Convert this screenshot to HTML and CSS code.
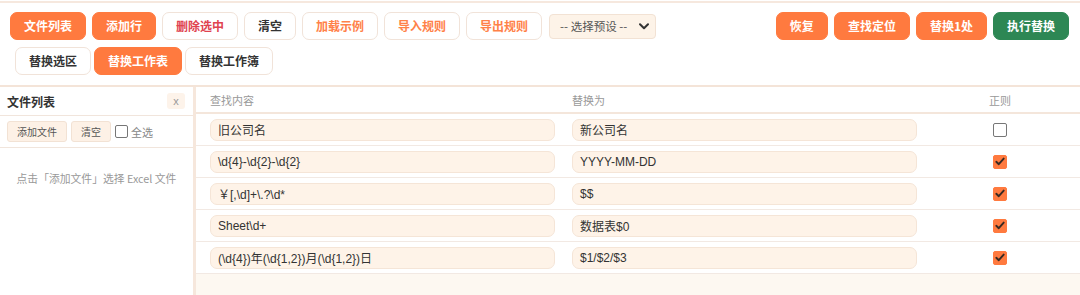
FILE: index.html
```html
<!DOCTYPE html>
<html lang="zh-CN">
<head>
<meta charset="utf-8">
<title>批量替换</title>
<link rel="stylesheet" href="styles.css">
</head>
<body>
<div class="app">
  <header class="toolbar">
    <div class="tb-row">
      <button class="btn primary">文件列表</button>
      <button class="btn primary">添加行</button>
      <button class="btn outline danger">删除选中</button>
      <button class="btn outline">清空</button>
      <button class="btn outline accent">加载示例</button>
      <button class="btn outline accent">导入规则</button>
      <button class="btn outline accent">导出规则</button>
      <div class="preset">
        <span>-- 选择预设 --</span>
        <svg width="10" height="7" viewBox="0 0 10 7"><path d="M1 1.2 L5 5.2 L9 1.2" fill="none" stroke="#333" stroke-width="2" stroke-linecap="round" stroke-linejoin="round"/></svg>
      </div>
      <div class="tb-right">
        <button class="btn primary">恢复</button>
        <button class="btn primary">查找定位</button>
        <button class="btn primary">替换1处</button>
        <button class="btn success">执行替换</button>
      </div>
    </div>
    <div class="tb-row scope">
      <button class="btn outline">替换选区</button>
      <button class="btn primary">替换工作表</button>
      <button class="btn outline">替换工作簿</button>
    </div>
  </header>

  <div class="content">
    <aside class="sidebar">
      <div class="side-head">
        <span class="side-title">文件列表</span>
        <span class="side-close">x</span>
      </div>
      <div class="side-tools">
        <button class="sbtn">添加文件</button>
        <button class="sbtn">清空</button>
        <label class="selall"><span class="box"></span>全选</label>
      </div>
      <p class="side-hint">点击「添加文件」选择 Excel 文件</p>
    </aside>

    <main class="main">
      <div class="grid head">
        <div>查找内容</div>
        <div>替换为</div>
        <div class="c">正则</div>
      </div>
      <div class="grid row">
        <div class="field">旧公司名</div>
        <div class="field">新公司名</div>
        <div class="c"><span class="chk"></span></div>
      </div>
      <div class="grid row">
        <div class="field">\d{4}-\d{2}-\d{2}</div>
        <div class="field">YYYY-MM-DD</div>
        <div class="c"><span class="chk on"><svg width="10" height="9" viewBox="0 0 10 9"><path d="M1.3 4.8 L3.8 7.2 L8.7 1.6" fill="none" stroke="#3a2a22" stroke-width="1.9" stroke-linecap="round" stroke-linejoin="round"/></svg></span></div>
      </div>
      <div class="grid row">
        <div class="field">￥[,\d]+\.?\d*</div>
        <div class="field">$$</div>
        <div class="c"><span class="chk on"><svg width="10" height="9" viewBox="0 0 10 9"><path d="M1.3 4.8 L3.8 7.2 L8.7 1.6" fill="none" stroke="#3a2a22" stroke-width="1.9" stroke-linecap="round" stroke-linejoin="round"/></svg></span></div>
      </div>
      <div class="grid row">
        <div class="field">Sheet\d+</div>
        <div class="field">数据表$0</div>
        <div class="c"><span class="chk on"><svg width="10" height="9" viewBox="0 0 10 9"><path d="M1.3 4.8 L3.8 7.2 L8.7 1.6" fill="none" stroke="#3a2a22" stroke-width="1.9" stroke-linecap="round" stroke-linejoin="round"/></svg></span></div>
      </div>
      <div class="grid row">
        <div class="field">(\d{4})年(\d{1,2})月(\d{1,2})日</div>
        <div class="field">$1/$2/$3</div>
        <div class="c"><span class="chk on"><svg width="10" height="9" viewBox="0 0 10 9"><path d="M1.3 4.8 L3.8 7.2 L8.7 1.6" fill="none" stroke="#3a2a22" stroke-width="1.9" stroke-linecap="round" stroke-linejoin="round"/></svg></span></div>
      </div>
    </main>
  </div>
</div>
</body>
</html>
```

FILE: styles.css
```css
* { box-sizing: border-box; }
html, body { margin: 0; padding: 0; background: #fff; }
body {
  font-family: "Liberation Sans", "Noto Sans CJK SC", sans-serif;
  color: #333;
  padding-top: 1px;
}
.app { width: 1080px; height: 294px; display: flex; flex-direction: column; }

.toolbar {
  border-top: 2px solid #f6e8de;
  border-bottom: 2px solid #f4e4d8;
  padding: 9px 11px 10px 10px;
  display: flex;
  flex-direction: column;
  gap: 7px;
}
.tb-row { display: flex; align-items: center; gap: 6px; }
.tb-right { margin-left: auto; display: flex; gap: 6px; }
.scope { margin-left: 5px; gap: 3px; }

.btn {
  height: 28px;
  padding: 0 13px;
  border: 1px solid transparent;
  border-radius: 7px;
  font-family: "Noto Sans CJK SC", "Liberation Sans", sans-serif;
  font-size: 12px;
  font-weight: 700;
  line-height: 1;
  display: inline-flex;
  align-items: center;
  justify-content: center;
  white-space: nowrap;
  cursor: pointer;
}
.btn.primary { background: #ff7a3f; border-color: #ff7a3f; color: #fff; }
.btn.success { background: #2d8754; border-color: #2d8754; color: #fff; }
.btn.outline { background: #fff; border-color: #f1e3d9; color: #333; }
.btn.outline.danger { color: #e0434f; }
.btn.outline.accent { color: #ff8148; }

.preset {
  width: 107px;
  height: 25px;
  margin-left: 1px;
  background: #fdf3e8;
  border: 1px solid #f2e2d4;
  border-radius: 4px;
  display: flex;
  align-items: center;
  justify-content: space-between;
  padding: 0 6px 0 10px;
  font-family: "Noto Sans CJK SC", sans-serif;
  font-size: 11.5px;
  color: #555;
}

.content { flex: 1; display: flex; min-height: 0; }

.sidebar {
  width: 196px;
  flex: none;
  border-right: 3px solid #f6e7dc;
  background: #fff;
}
.side-head {
  height: 29px;
  display: flex;
  align-items: center;
  justify-content: space-between;
  padding: 0 8px 0 7px;
  border-bottom: 1px solid #f1e5dc;
}
.side-title {
  font-family: "Noto Sans CJK SC", sans-serif;
  font-size: 12px;
  font-weight: 700;
  color: #333;
}
.side-close {
  width: 18px;
  height: 16px;
  background: #fdf3ea;
  border-radius: 3px;
  color: #999;
  font-size: 11px;
  display: flex;
  align-items: center;
  justify-content: center;
  line-height: 1;
}
.side-tools {
  height: 32px;
  display: flex;
  align-items: center;
  gap: 4px;
  padding: 0 7px;
  border-bottom: 1px solid #f1e5dc;
}
.sbtn {
  height: 21px;
  padding: 0 9px;
  background: #fdf1e6;
  border: 1px solid #f2e2d4;
  border-radius: 3px;
  font-family: "Noto Sans CJK SC", sans-serif;
  font-size: 10px;
  color: #555;
  line-height: 1;
}
.selall {
  display: flex;
  align-items: center;
  gap: 3px;
  font-family: "Noto Sans CJK SC", sans-serif;
  font-size: 11px;
  color: #888;
}
.box {
  width: 13px;
  height: 13px;
  border: 1px solid #767676;
  border-radius: 2px;
  background: #fff;
}
.side-hint {
  margin: 22px 0 0;
  text-align: center;
  font-family: "Noto Sans CJK SC", sans-serif;
  font-size: 10.8px;
  color: #999;
}

.main { flex: 1; background: #fdf8f1; }
.grid {
  display: grid;
  grid-template-columns: 345px 345px 1fr;
  column-gap: 17px;
  padding: 0 14px;
  align-items: center;
  background: #fff;
}
.head {
  height: 27px;
  border-bottom: 2px solid #f4e6db;
  font-family: "Noto Sans CJK SC", sans-serif;
  font-size: 11px;
  color: #999;
}
.c { display: flex; justify-content: center; }
.row {
  height: 32px;
  border-bottom: 1px solid #f2e9e3;
}
.field {
  height: 22px;
  background: #fef3e8;
  border: 1px solid #f5e5d7;
  border-radius: 7px;
  padding: 0 7px;
  display: flex;
  align-items: center;
  font-size: 12px;
  color: #333;
  white-space: nowrap;
  overflow: hidden;
}
.chk {
  width: 14px;
  height: 14px;
  border: 1px solid #777;
  border-radius: 2px;
  background: #fff;
  display: flex;
  align-items: center;
  justify-content: center;
}
.chk.on { background: #ff7a3f; border-color: #ff7a3f; }
```
